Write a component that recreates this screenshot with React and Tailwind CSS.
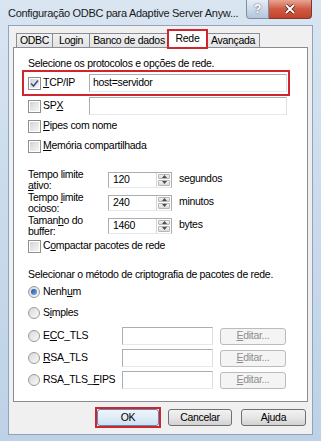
import React from 'react';

const font = { fontFamily: '"Liberation Sans", Arial, sans-serif' };

const U = ({ children }) => <span className="underline underline-offset-1">{children}</span>;

const Checkbox = ({ checked = false }) => (
  <div className="w-[13px] h-[13px] shrink-0 border border-[#8e8f8f] bg-white p-[1px]">
    <div className="w-full h-full bg-gradient-to-br from-[#d4d4d4] to-[#f7f7f7] flex items-center justify-center">
      {checked && (
        <svg width="9" height="9" viewBox="0 0 9 9">
          <path d="M1 4.5 L3.5 7 L8 1.5" fill="none" stroke="#3c4f8a" strokeWidth="1.6" />
        </svg>
      )}
    </div>
  </div>
);

const Radio = ({ checked = false }) => (
  <div className="w-[12px] h-[12px] shrink-0 rounded-full border border-[#9a9a9a] bg-gradient-to-br from-[#d8d8d8] to-[#fafafa] flex items-center justify-center">
    {checked && <div className="w-[6px] h-[6px] rounded-full bg-gradient-to-br from-[#1e4e9c] to-[#7fb0e6]" />}
  </div>
);

const TextBox = ({ value = '', className = '' }) => (
  <div className={`h-[18px] border border-[#abadb3] border-b-[#e3e9ef] border-r-[#dbdfe6] bg-white flex items-center pl-[3px] text-[10.5px] text-black ${className}`}>
    {value}
  </div>
);

const Spin = ({ value }) => (
  <div className="flex h-[16px] w-[64px] shrink-0 border border-[#abadb3] border-b-[#e3e9ef] bg-white">
    <div className="flex-1 flex items-center pl-[4px] text-[10.5px]">{value}</div>
    <div className="w-[15px] flex flex-col border-l border-[#d5d5d5] p-[1px] gap-[1px]">
      <div className="flex-1 bg-gradient-to-b from-[#f3f3f3] to-[#dcdcdc] border border-[#b6b6b6] rounded-[1px] flex items-center justify-center">
        <svg width="5" height="3" viewBox="0 0 5 3"><path d="M0 3 L2.5 0 L5 3Z" fill="#4d4d4d" /></svg>
      </div>
      <div className="flex-1 bg-gradient-to-b from-[#f3f3f3] to-[#dcdcdc] border border-[#b6b6b6] rounded-[1px] flex items-center justify-center">
        <svg width="5" height="3" viewBox="0 0 5 3"><path d="M0 0 L2.5 3 L5 0Z" fill="#4d4d4d" /></svg>
      </div>
    </div>
  </div>
);

const Button = ({ children, def = false, disabled = false, className = '' }) => (
  <div
    className={`h-[17px] flex items-center justify-center rounded-[3px] border text-[10.5px] whitespace-nowrap ${
      disabled
        ? 'border-[#b9bcbf] bg-[#f4f4f4] text-[#8d8d8d]'
        : def
        ? 'border-[#5a8bb5] bg-gradient-to-b from-[#eef5fb] via-[#e0ecf7] to-[#cfe1f1] text-black'
        : 'border-[#707070] bg-gradient-to-b from-[#f2f2f2] via-[#e6e6e6] to-[#d2d2d2] text-black'
    } ${className}`}
  >
    {children}
  </div>
);

const CheckRow = ({ label, checked, children }) => (
  <div className="h-[20px] flex items-center">
    <Checkbox checked={checked} />
    <span className="ml-[2px] w-[46px] text-[10.5px] whitespace-nowrap">{label}</span>
    {children}
  </div>
);

const SpinRow = ({ l1, l2, value, unit }) => (
  <div className="h-[23px] flex items-center">
    <div className="w-[80px] text-[10.5px] leading-[11px] whitespace-nowrap">
      <div>{l1}</div>
      <div>{l2}</div>
    </div>
    <Spin value={value} />
    <span className="ml-[7px] text-[10.5px] -mt-[2px]">{unit}</span>
  </div>
);

const RadioRow = ({ label, checked, edit = false, className = '' }) => (
  <div className={`h-[18px] flex items-center ${className}`}>
    <Radio checked={checked} />
    <span className="ml-[3px] w-[79px] text-[10.5px] whitespace-nowrap">{label}</span>
    {edit && (
      <>
        <TextBox className="w-[91px] h-[17px]" />
        <Button disabled className="ml-[7px] w-[66px]">
          <U>E</U>ditar...
        </Button>
      </>
    )}
  </div>
);

const Tab = ({ children, selected = false, className = '' }) => (
  <div
    className={`relative shrink-0 flex items-center justify-center whitespace-nowrap text-[10.5px] border border-[#898c95] border-b-0 ${
      selected ? 'h-[18px] bg-white -mx-[2px] z-10 -mb-[1px] pb-[2px]' : 'h-[14px] bg-gradient-to-b from-[#f2f2f2] to-[#e3e3e3]'
    } ${className}`}
  >
    {children}
    {selected && <span className="absolute -left-[1px] -right-[1px] -top-[2px] -bottom-[1px] border-2 border-[#d0242e]" />}
  </div>
);

export default function App() {
  return (
    <div style={font} className="w-[321px] h-[441px] flex flex-col bg-gradient-to-b from-[#d9e5f1] via-[#c9daeb] to-[#bed1e6] text-[#000] tracking-[-0.3px] overflow-hidden">
      <div className="h-[25px] flex items-start shrink-0">
        <div className="pl-[8px] pt-[6px] text-[11px] leading-[14px] text-[#1a1a1a] w-[246px] shrink-0 overflow-hidden whitespace-nowrap">
          Configuração ODBC para Adaptive Server Anyw...
        </div>
        <div className="shrink-0 w-[23px] h-[19px] rounded-bl-[4px] border border-t-0 border-[#7c8ea3] bg-gradient-to-b from-[#e6eef7] to-[#b3c6dc] flex items-center justify-center text-[12px] font-bold text-white [text-shadow:0_0_2px_#445]">
          ?
        </div>
        <div className="shrink-0 w-[43px] h-[19px] rounded-br-[4px] border border-t-0 border-l-0 border-[#7b3a30] bg-gradient-to-b from-[#e8a493] via-[#cf5a43] to-[#c2422a] flex items-center justify-center">
          <svg width="12" height="10" viewBox="0 0 12 10">
            <path d="M2 1 L10 9 M10 1 L2 9" stroke="#4a1c14" strokeWidth="3.4" />
            <path d="M2 1 L10 9 M10 1 L2 9" stroke="#ffffff" strokeWidth="2" />
          </svg>
        </div>
      </div>

      <div className="mx-[8px] flex-1 mb-[6px] bg-[#f0f0f0] border border-[#8ea4bd] flex flex-col">
        <div className="flex items-end h-[21px] pl-[7px] pt-[3px]">
          <Tab className="w-[37px]">ODBC</Tab>
          <Tab className="w-[38px] -ml-[1px]">Login</Tab>
          <Tab className="w-[80px] -ml-[1px]">Banco de dados</Tab>
          <Tab selected className="w-[41px]">Rede</Tab>
          <Tab className="w-[54px]">Avançada</Tab>
        </div>

        <div className="ml-[4px] w-[295px] h-[355px] border border-[#898c95] bg-white flex flex-col pl-[14px]">
          <div className="mt-[9px] h-[14px] flex items-center text-[10.5px] whitespace-nowrap">Selecione os protocolos e opções de rede.</div>

          <div className="-mt-[1px] ml-[-6px] w-[268px] h-[26px] border-2 border-[#d0242e] flex items-center pl-[4px]">
            <Checkbox checked />
            <span className="ml-[2px] w-[46px] text-[10.5px]">
              <U>T</U>CP/IP
            </span>
            <TextBox value="host=servidor" className="w-[198px]" />
          </div>

          <CheckRow label={<>SP<U>X</U></>}>
            <TextBox className="w-[198px]" />
          </CheckRow>
          <CheckRow label={<><U>P</U>ipes com nome</>} />
          <CheckRow label={<><U>M</U>emória compartilhada</>} />

          <div className="mt-[12px]">
            <SpinRow l1="Tempo limite" l2={<><U>a</U>tivo:</>} value="120" unit="segundos" />
            <SpinRow l1={<>Tempo <U>l</U>imite</>} l2="ocioso:" value="240" unit="minutos" />
            <SpinRow l1={<>Taman<U>h</U>o do</>} l2="buffer:" value="1460" unit="bytes" />
          </div>

          <div className="h-[18px] flex items-center">
            <Checkbox />
            <span className="ml-[2px] text-[10.5px]">
              C<U>o</U>mpactar pacotes de rede
            </span>
          </div>

          <div className="mt-[13px] h-[14px] flex items-center text-[10.5px] whitespace-nowrap">Selecionar o método de criptografia de pacotes de rede.</div>

          <RadioRow checked className="mt-[1px]" label={<>Nenh<U>u</U>m</>} />
          <RadioRow className="mt-[3px]" label={<>S<U>i</U>mples</>} />
          <RadioRow className="mt-[5px]" edit label={<>E<U>C</U>C_TLS</>} />
          <RadioRow className="mt-[4px]" edit label={<><U>R</U>SA_TLS</>} />
          <RadioRow className="mt-[4px]" edit label={<>RSA_TLS_<U>F</U>IPS</>} />
        </div>

        <div className="flex justify-end items-center gap-[9px] pr-[6px] mt-[7px]">
          <div className="relative">
            <Button def className="w-[62px]">OK</Button>
            <span className="absolute -inset-[2px] border-2 border-[#d0242e]" />
          </div>
          <Button className="w-[64px]">Cancelar</Button>
          <Button className="w-[65px]">Ajuda</Button>
        </div>
      </div>
    </div>
  );
}
